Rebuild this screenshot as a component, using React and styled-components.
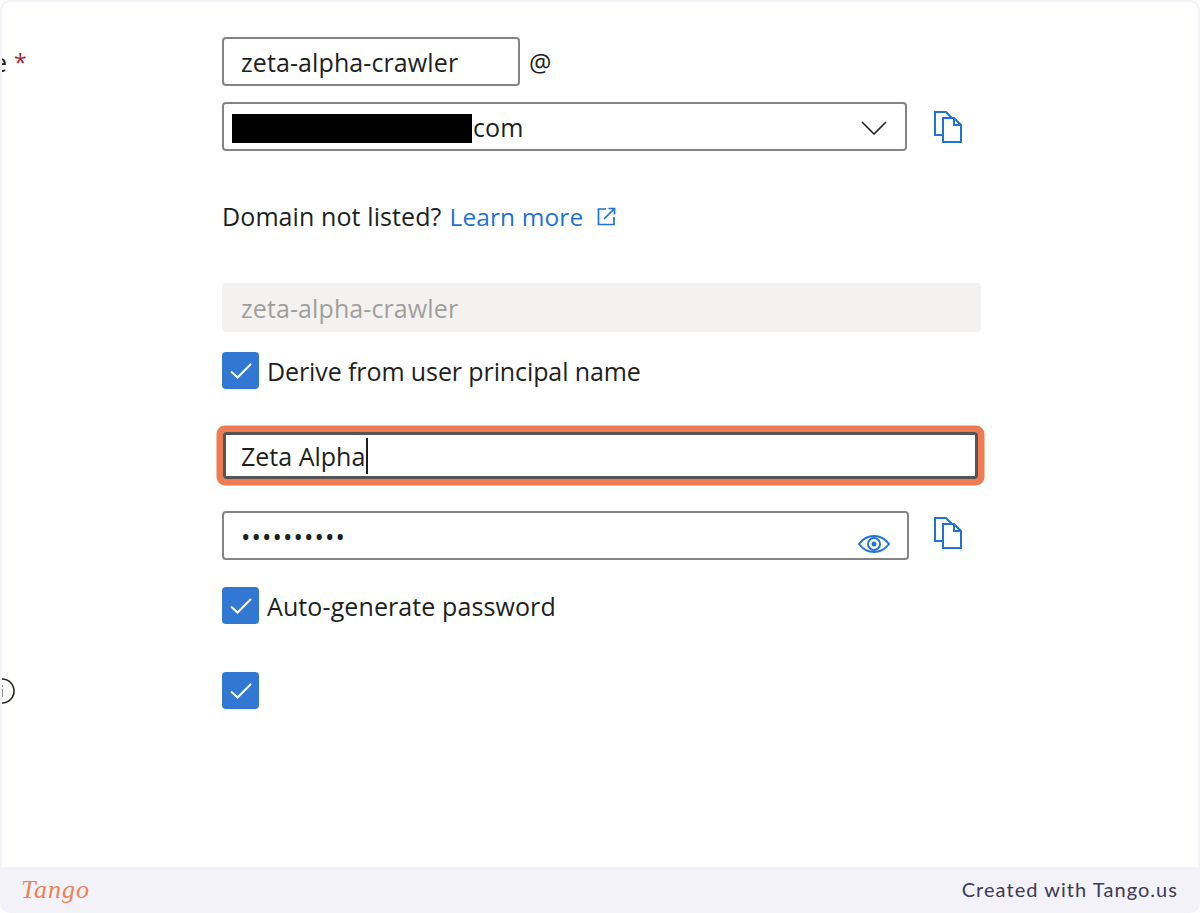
import styled, { createGlobalStyle } from "styled-components";

const GlobalStyle = createGlobalStyle`
  html, body {
    margin: 0;
    padding: 0;
    background: #fff;
  }
`;

const CopyIcon = ({ left, lift }) => (
  <IconSlot $left={left} $lift={lift}>
    <svg width="30" height="34" viewBox="0 0 30 34" fill="none" stroke="#1f72d6" strokeWidth="2">
      <path d="M9 25H2V2h11l6 6" />
      <path d="M10 8h11l7 7v17H10z" fill="#fff" />
      <path d="M21 8v7h7" />
    </svg>
  </IconSlot>
);

const CheckIcon = () => (
  <svg width="22" height="16" viewBox="0 0 22 16" fill="none" stroke="#fff" strokeWidth="2">
    <path d="M1 8.5l6.5 6L21 1" />
  </svg>
);

const ChevronIcon = () => (
  <svg width="26" height="14" viewBox="0 0 26 14" fill="none" stroke="#222" strokeWidth="1.6">
    <path d="M1 1l12 12L25 1" />
  </svg>
);

const ExternalIcon = () => (
  <svg width="19" height="19" viewBox="0 0 19 19" fill="none" stroke="#1f72d6" strokeWidth="1.7">
    <path d="M9 2H1.500v15.500H17V10" />
    <path d="M7 12L17 2M11.500 1.500H17.500V7.500" />
  </svg>
);

const EyeIcon = () => (
  <svg width="32" height="18" viewBox="0 0 32 18" fill="none" stroke="#2474d6" strokeWidth="2">
    <path d="M1 9C5 3.500 10 1 16 1s11 2.500 15 8c-4 5.500-9 8-15 8S5 14.500 1 9z" />
    <circle cx="16" cy="9" r="6" />
    <circle cx="16" cy="9" r="2.500" fill="#2474d6" stroke="none" />
  </svg>
);

const InfoIcon = () => (
  <svg width="26" height="26" viewBox="0 0 26 26" fill="none" stroke="#222" strokeWidth="1.600">
    <circle cx="13" cy="13" r="12" />
    <path d="M13 11v8M13 7v2" stroke="#777" />
  </svg>
);

export default function App() {
  return (
    <Frame>
      <GlobalStyle />
      <Card>
        <FormRow $top={35}>
          <Label>
            <Clipped>e</Clipped>
            <Required>*</Required>
          </Label>
          <Field $width={298}>zeta-alpha-crawler</Field>
          <AtSign>@</AtSign>
        </FormRow>

        <FormRow $top={16}>
          <Label />
          <Field $width={685} $redacted>
            <Redaction />
            com
            <SuffixIcon $right={18} $top={17}>
              <ChevronIcon />
            </SuffixIcon>
          </Field>
          <CopyIcon left={26} />
        </FormRow>

        <FormRow $top={48}>
          <Label />
          <Hint>
            Domain not listed?
            <HintLink>Learn more</HintLink>
            <ExternalIcon />
          </Hint>
        </FormRow>

        <FormRow $top={50}>
          <Label />
          <Field $width={759} $disabled>
            zeta-alpha-crawler
          </Field>
        </FormRow>

        <FormRow $top={20}>
          <Label />
          <Checkbox>
            <CheckIcon />
          </Checkbox>
          <CheckLabel $spacing={-0.1}>Derive from user principal name</CheckLabel>
        </FormRow>

        <FormRow $top={43}>
          <Label />
          <FocusedField>
            Zeta Alpha
            <Caret />
          </FocusedField>
        </FormRow>

        <FormRow $top={32}>
          <Label />
          <Field $width={687} $password>
            ••••••••••
            <SuffixIcon $right={17} $top={22}>
              <EyeIcon />
            </SuffixIcon>
          </Field>
          <CopyIcon left={24} lift={5} />
        </FormRow>

        <FormRow $top={27}>
          <Label />
          <Checkbox>
            <CheckIcon />
          </Checkbox>
          <CheckLabel $spacing={0.1}>Auto-generate password</CheckLabel>
        </FormRow>

        <FormRow $top={48}>
          <Label>
            <InfoSlot>
              <InfoIcon />
            </InfoSlot>
          </Label>
          <Checkbox>
            <CheckIcon />
          </Checkbox>
        </FormRow>
      </Card>

      <Footer>
        <Logo>Tango</Logo>
        <Credit>Created with Tango.us</Credit>
      </Footer>
    </Frame>
  );
}

const Frame = styled.div`
  height: 913px;
  display: flex;
  flex-direction: column;
  overflow: hidden;
  background: #f3f2f8;
  border-radius: 10px;
  font-family: "Open Sans", "Noto Sans", sans-serif;
  font-size: 25px;
  color: #201f1e;
`;

const Card = styled.main`
  flex: 1;
  margin: 2px 2px 0;
  background: #fff;
  border-radius: 8px 8px 0 0;
  overflow: hidden;
`;

const FormRow = styled.div`
  display: flex;
  align-items: center;
  margin-top: ${(p) => p.$top}px;
`;

const Label = styled.div`
  flex: 0 0 220px;
  display: flex;
  align-items: center;
`;

const Clipped = styled.span`
  margin-left: -9px;
`;

const Required = styled.span`
  margin-left: 7px;
  font-size: 23px;
  color: #a4262c;
`;

const InfoSlot = styled.span`
  display: flex;
  margin-left: -13px;
`;

const Field = styled.div`
  position: relative;
  box-sizing: border-box;
  width: ${(p) => p.$width}px;
  height: 49px;
  display: flex;
  align-items: center;
  padding-left: ${(p) => (p.$redacted ? 8 : 17)}px;
  border: ${(p) => (p.$disabled ? "none" : "2px solid #858585")};
  border-radius: 4px;
  background: ${(p) => (p.$disabled ? "#f3f2f1" : "#fff")};
  color: ${(p) => (p.$disabled ? "#a19f9d" : "#201f1e")};
  letter-spacing: ${(p) => (p.$password ? "1.1px" : "0.1px")};
  ${(p) => p.$disabled && "padding-left: 19px;"}
`;

const Redaction = styled.span`
  width: 240px;
  height: 29px;
  margin: 3px 1px 0 0;
  background: #000;
`;

const SuffixIcon = styled.span`
  position: absolute;
  display: flex;
  right: ${(p) => p.$right}px;
  top: ${(p) => p.$top}px;
`;

const IconSlot = styled.span`
  display: flex;
  margin-left: ${(p) => p.$left}px;
  margin-top: ${(p) => -(p.$lift || 0)}px;
`;

const AtSign = styled.span`
  margin-left: 9px;
`;

const Hint = styled.div`
  display: flex;
  align-items: center;
  height: 34px;
  letter-spacing: 0.1px;
`;

const HintLink = styled.a`
  margin: 0 14px 0 8px;
  font-size: 24.5px;
  color: #1f72d6;
`;

const Checkbox = styled.span`
  flex: none;
  width: 37px;
  height: 37px;
  display: flex;
  align-items: center;
  justify-content: center;
  border-radius: 4px;
  background: #3277d1;
`;

const CheckLabel = styled.span`
  margin-left: 8px;
  letter-spacing: ${(p) => p.$spacing}px;
`;

const FocusedField = styled.div`
  box-sizing: border-box;
  width: 755px;
  height: 47px;
  margin-left: 1px;
  display: flex;
  align-items: center;
  padding-left: 15px;
  border: 3px solid #555;
  border-radius: 3px;
  box-shadow: 0 0 0 6.5px #ee7b52;
`;

const Caret = styled.span`
  width: 2px;
  height: 36px;
  margin-left: 1px;
  background: #201f1e;
`;

const Footer = styled.footer`
  height: 46px;
  flex: none;
  display: flex;
  align-items: center;
  justify-content: space-between;
  padding: 0 22px 0 21px;
`;

const Logo = styled.span`
  font-family: "Liberation Serif", serif;
  font-style: italic;
  font-size: 26px;
  letter-spacing: 1px;
  color: #f08058;
`;

const Credit = styled.span`
  font-family: "Lato", sans-serif;
  font-size: 20px;
  letter-spacing: 1.050px;
  color: #3d3857;
  margin-top: -2px;
`;
